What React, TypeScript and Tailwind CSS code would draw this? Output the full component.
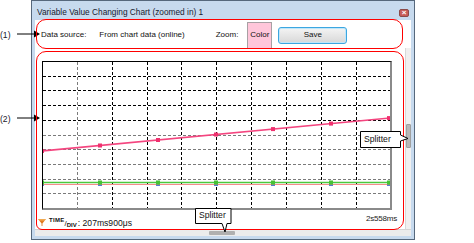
import React from 'react';

const font = { fontFamily: '"Liberation Sans", Arial, sans-serif' };

const X0 = -1;
const DX = 34.85;
const DY = 14.7;
const markerXs = [-1, 57, 115, 173, 230, 288, 346];

function pinkY(x: number) {
  return 89 + ((x + 1) / 348) * (56 - 89);
}

function Plot() {
  const vLines = Array.from({ length: 9 }, (_, i) => X0 + DX * (i + 1));
  const hLines = Array.from({ length: 9 }, (_, i) => -1 + DY * (i + 1));
  return (
    <div className="w-[350px] h-[149px] border-t border-l border-black border-r-2 border-b-2 border-r-[#8a8a8a] border-b-[#8a8a8a] bg-white">
      <svg width="347" height="146" viewBox="0 0 347 146" className="block">
        {hLines.map((y, i) => (
          <line
            key={'h' + i}
            x1={0}
            x2={347}
            y1={Math.round(y) + 0.5}
            y2={Math.round(y) + 0.5}
            stroke={i >= 4 ? '#7a7a7a' : '#000'}
            strokeWidth={1}
            strokeDasharray="3 2"
          />
        ))}
        {vLines.map((x, i) => (
          <line
            key={'v' + i}
            x1={Math.round(x) + 0.5}
            x2={Math.round(x) + 0.5}
            y1={0}
            y2={146}
            stroke={i === 0 ? '#7a7a7a' : '#000'}
            strokeWidth={1}
            strokeDasharray="3 2"
          />
        ))}
        {/* pink trace */}
        <line x1={-1} y1={89} x2={347} y2={56} stroke="#f4457f" strokeWidth={1.6} />
        {markerXs.map((x) => (
          <rect key={'p' + x} x={x - 2} y={pinkY(x) - 2} width={4} height={4} fill="#f0306e" />
        ))}
        {/* red + green traces */}
        <line x1={0} y1={122.5} x2={347} y2={122.5} stroke="#f58a8a" strokeWidth={1.2} />
        <line x1={0} y1={120.5} x2={347} y2={120.5} stroke="#4cc83c" strokeWidth={1.6} />
        {markerXs.map((x) => (
          <g key={'g' + x}>
            <rect x={x - 2} y={121} width={4} height={3} fill="#f0904a" />
            <rect x={x - 2} y={122.5} width={4} height={1.5} fill="#5a7ad0" />
            <rect x={x - 2} y={118.5} width={4} height={4} fill="#46c234" />
          </g>
        ))}
      </svg>
    </div>
  );
}

function Arrow({ top }: { top: number }) {
  return (
    <svg className="absolute left-[17px]" style={{ top }} width="24" height="8" viewBox="0 0 24 8">
      <line x1="0" y1="4" x2="18" y2="4" stroke="#000" strokeWidth="1" />
      <polygon points="17,0.5 23,4 17,7.5" fill="#000" />
    </svg>
  );
}

export default function App() {
  return (
    <div className="relative w-[474px] h-[243px] bg-white overflow-hidden text-[8px] text-[#111]" style={font}>
      {/* window */}
      <div className="ml-[31px] w-[384px] h-[240px] border border-[#56687c] bg-[#c7daee] flex flex-col">
        <div className="h-[18px] flex items-center justify-between pl-[5px] pr-[5px] pt-[5px]">
          <span className="text-[8.3px] text-[#16202e] leading-none">Variable Value Changing Chart (zoomed in) 1</span>
          <div className="w-[10px] h-[8px] rounded-[2px] bg-[#c85c58] border border-[#8a4a48] flex items-center justify-center text-white text-[8px] leading-none font-bold">
            ×
          </div>
        </div>
        <div className="flex-1 mx-[3px] mt-[1px] bg-white flex flex-col">
          {/* toolbar */}
          <div className="h-[30px] flex items-center pl-[6px]">
            <span>Data source:</span>
            <span className="ml-[13px]">From chart data (online)</span>
            <span className="ml-[31px]">Zoom:</span>
            <div className="ml-[9px] w-[25px] h-[27px] bg-[#ffc6da] border border-[#a8a0a4] flex items-center justify-center">
              Color
            </div>
            <button className="ml-[6px] w-[69px] h-[17px] rounded-[3px] border border-[#3ca6e0] bg-gradient-to-b from-[#f4f4f4] to-[#d8d8d8] text-[8px] leading-none shadow-[inset_0_0_0_1px_#bfe6fa]">
              Save
            </button>
          </div>
          {/* chart */}
          <div className="flex-1 flex">
            <div className="flex-1 flex flex-col pl-[7px] pt-[11px]">
              <Plot />
              <div className="flex-1 flex items-start justify-between pr-[8px]">
                <div className="flex items-end mt-[7px] -ml-[4px] h-[11px]">
                  <svg width="8" height="7" viewBox="0 0 9 8" className="mb-[2px]">
                    <polygon points="0,0 9,0 5,5 5,8 4,8 4,5" fill="#e07a20" />
                    <line x1="1" y1="1" x2="8" y2="1" stroke="#ffd27a" strokeWidth="1" />
                  </svg>
                  <span className="ml-[3px] text-[6px] font-bold leading-none self-start tracking-[0.3px]">TIME</span>
                  <span className="text-[8px] leading-none">/</span>
                  <span className="text-[6px] font-bold leading-none">DIV</span>
                  <span className="ml-[1px] text-[8.6px] leading-none">: 207ms900μs</span>
                </div>
                <span className="mt-[5px] text-[8px] leading-none tracking-[-0.2px] text-[#222]">2s558ms</span>
              </div>
            </div>
            {/* vertical scrollbar */}
            <div className="w-[6px] mt-[-2px] bg-[#f0f0f0] border-l border-[#d8d8d8] flex flex-col">
              <div className="h-[76px]" />
              <div className="h-[24px] bg-[#b8b8b8] border border-[#a0a0a0] rounded-[1px]" />
            </div>
          </div>
          {/* horizontal scrollbar */}
          <div className="h-[7px] bg-[#ececec] border-t border-[#d4d4d4] flex">
            <div className="w-[174px]" />
            <div className="w-[26px] h-[4px] mt-[1px] bg-[#b0b0b0] rounded-[1px]" />
          </div>
        </div>
        <div className="h-[3px]" />
      </div>

      {/* annotation labels */}
      <span className="absolute left-0 top-[29px] text-[8.6px] text-[#1a1a2a]">(1)</span>
      <Arrow top={30} />
      <span className="absolute left-0 top-[113px] text-[8.6px] text-[#1a1a2a]">(2)</span>
      <Arrow top={114} />

      {/* red outlines */}
      <div className="absolute left-[36px] top-[19px] w-[367px] h-[30px] border-[1.5px] border-[#ff0000] rounded-[10px]" />
      <div className="absolute left-[36px] top-[51px] w-[368px] h-[179px] border-[1.5px] border-[#ff0000] rounded-t-[10px] rounded-bl-[6px] rounded-br-[10px]" />

      {/* Splitter callouts */}
      <div className="absolute left-[360px] top-[131px] w-[50px] h-[18px]">
        <svg width="50" height="18" viewBox="0 0 50 18" className="absolute inset-0">
          <path d="M0.5,0.5 H40.5 V4 L48,7.5 L40.5,10 V16.5 H0.5 Z" fill="#fff" stroke="#000" strokeWidth="1" />
        </svg>
        <span className="absolute left-[4px] top-[3px] text-[8.6px] leading-[11px] text-[#111]">Splitter</span>
      </div>
      <div className="absolute left-[195px] top-[208px] w-[37px] h-[25px]">
        <svg width="37" height="25" viewBox="0 0 37 25" className="absolute inset-0">
          <path d="M0.5,0.5 H36 V15.5 H32 L30,24 L27,15.5 H0.5 Z" fill="#fff" stroke="#000" strokeWidth="1" />
        </svg>
        <span className="absolute left-[4px] top-[2px] text-[8.6px] leading-[11px] text-[#111]">Splitter</span>
      </div>
    </div>
  );
}
